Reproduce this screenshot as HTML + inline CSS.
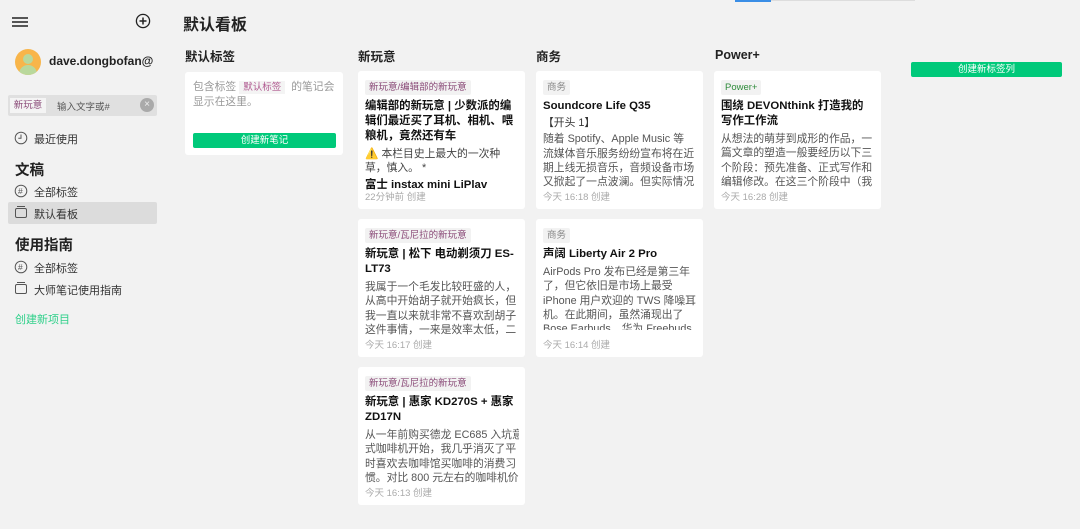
<!DOCTYPE html>
<html><head><meta charset="utf-8"><style>
*{margin:0;padding:0;box-sizing:border-box}
body{width:1080px;height:529px;background:#f2f2f2;font-family:"Liberation Sans","Noto Sans CJK SC",sans-serif;color:#222;position:relative;overflow:hidden}
.a{position:absolute}
.card{position:absolute;background:#fff;border-radius:3px;padding:6px 6px 0 7px;overflow:hidden;white-space:nowrap}
.tag{display:inline-block;background:#f2f2f2;color:#8a4a78;font-size:9.5px;padding:0 4px;line-height:15px;border-radius:2px}
.tag.g{color:#888}.tag.p{color:#2e8b3a}
.t{font-weight:bold;font-size:11.4px;line-height:15px;margin-top:4px;color:#111}
.b{font-size:10.8px;line-height:14.3px;color:#555;margin-top:3px;overflow:hidden}
.d{position:absolute;bottom:6px;left:7px;font-size:9.5px;color:#aaa}
.col{font-weight:bold;font-size:12.5px;top:46px}
.side{font-size:11px;color:#333}
.h{font-weight:bold;font-size:14.5px}
.btn{position:absolute;background:#00c97a;color:#fff;font-size:9.5px;text-align:center;border-radius:2px}
</style></head><body>
<div class="a" style="left:735px;top:0;width:36px;height:2px;background:#3a8ee6"></div>
<div class="a" style="left:771px;top:0;width:144px;height:1px;background:#ddd"></div>
<!-- sidebar -->
<svg class="a" style="left:11px;top:16px" width="18" height="12"><path d="M1 2H17M1 6H17M1 10H17" stroke="#222" stroke-width="1.6"/></svg>
<svg class="a" style="left:135px;top:13px" width="16" height="16"><circle cx="8" cy="8" r="6.6" fill="none" stroke="#222" stroke-width="1.3"/><path d="M8 4.5V11.5M4.5 8H11.5" stroke="#222" stroke-width="1.5"/></svg>
<div class="a" style="left:15px;top:49px;width:26px;height:26px;border-radius:50%;background:#f8b54a;overflow:hidden"><div class="a" style="left:8px;top:5px;width:10px;height:10px;border-radius:50%;background:#b9d89c"></div><div class="a" style="left:4px;top:16px;width:18px;height:12px;border-radius:9px 9px 0 0;background:#b9d89c"></div></div>
<div class="a" style="left:49px;top:54px;font-weight:bold;font-size:12px">dave.dongbofan@</div>
<div class="a" style="left:8px;top:95px;width:149px;height:21px;background:#e0e0e0;border-radius:2px"></div>
<div class="a" style="left:10px;top:98px;width:36px;height:15px;background:#f4f4f4;color:#8a4a78;font-size:9.5px;line-height:15px;text-align:center">新玩意</div>
<div class="a" style="left:57px;top:99px;font-size:9.5px;color:#555">输入文字或#</div>
<div class="a" style="left:140px;top:98px;width:14px;height:14px;border-radius:50%;background:#aaa;color:#eee;font-size:10px;line-height:14px;text-align:center">×</div>
<svg class="a" style="left:14px;top:131px" width="14" height="14"><circle cx="7" cy="7" r="5.8" fill="none" stroke="#555"/><path d="M7 3.5V7.3H4.3" stroke="#555" fill="none"/></svg>
<div class="a side" style="left:34px;top:131px">最近使用</div>
<div class="a h" style="left:15px;top:159px">文稿</div>
<svg class="a" style="left:14px;top:184px" width="14" height="14"><circle cx="7" cy="7" r="5.8" fill="none" stroke="#555"/><text x="4" y="10" font-size="8.5" fill="#555" font-family="Liberation Sans">#</text></svg>
<div class="a side" style="left:34px;top:184px">全部标签</div>
<div class="a" style="left:8px;top:202px;width:149px;height:22px;background:#dcdcdc;border-radius:2px"></div>
<svg class="a" style="left:14px;top:205px" width="14" height="14"><rect x="1.5" y="3.5" width="11" height="9" rx="1.5" fill="none" stroke="#555"/><path d="M3 1.5H11" stroke="#555"/></svg>
<div class="a side" style="left:34px;top:206px">默认看板</div>
<div class="a h" style="left:15px;top:234px">使用指南</div>
<svg class="a" style="left:14px;top:260px" width="14" height="14"><circle cx="7" cy="7" r="5.8" fill="none" stroke="#555"/><text x="4" y="10" font-size="8.5" fill="#555" font-family="Liberation Sans">#</text></svg>
<div class="a side" style="left:34px;top:260px">全部标签</div>
<svg class="a" style="left:14px;top:281px" width="14" height="14"><rect x="1.5" y="3.5" width="11" height="9" rx="1.5" fill="none" stroke="#555"/><path d="M3 1.5H11" stroke="#555"/></svg>
<div class="a side" style="left:34px;top:282px">大师笔记使用指南</div>
<div class="a" style="left:15px;top:311px;font-size:11px;color:#2fd08a">创建新项目</div>
<!-- main -->
<div class="a" style="left:183px;top:11px;font-weight:bold;font-size:16px">默认看板</div>
<div class="a col" style="left:185px">默认标签</div>
<div class="a col" style="left:358px">新玩意</div>
<div class="a col" style="left:536px">商务</div>
<div class="a col" style="left:715px;top:48px">Power+</div>
<div class="card" style="left:185px;top:72px;width:158px;height:83px;padding:8px">
<div style="font-size:10.8px;line-height:15px;color:#999">包含标签 <span style="background:#f4f4f4;color:#b05a90;font-size:9.5px;padding:1px 4px">默认标签</span> &nbsp;的笔记会<br>显示在这里。</div></div>
<div class="btn" style="left:193px;top:133px;width:143px;height:15px;line-height:15px">创建新笔记</div>
<div class="btn" style="left:911px;top:62px;width:151px;height:15px;line-height:15px">创建新标签列</div>

<div class="card" style="left:358px;top:71px;width:167px;height:138px">
<span class="tag">新玩意/编辑部的新玩意</span>
<div class="t">编辑部的新玩意 | 少数派的编<br>辑们最近买了耳机、相机、喂<br>粮机，竟然还有车</div>
<div class="b" style="color:#444">⚠️ 本栏目史上最大的一次种<br>草，慎入。 *</div>
<div class="t" style="margin-top:2px">富士 instax mini LiPlav</div>
<div class="d">22分钟前 创建</div></div>

<div class="card" style="left:358px;top:219px;width:167px;height:138px">
<span class="tag">新玩意/瓦尼拉的新玩意</span>
<div class="t">新玩意 | 松下 电动剃须刀 ES-<br>LT73</div>
<div class="b">我属于一个毛发比较旺盛的人，<br>从高中开始胡子就开始疯长，但<br>我一直以来就非常不喜欢刮胡子<br>这件事情，一来是效率太低，二</div>
<div class="d">今天 16:17 创建</div></div>

<div class="card" style="left:358px;top:367px;width:167px;height:138px">
<span class="tag">新玩意/瓦尼拉的新玩意</span>
<div class="t">新玩意 | 惠家 KD270S + 惠家<br>ZD17N</div>
<div class="b">从一年前购买德龙 EC685 入坑意<br>式咖啡机开始，我几乎消灭了平<br>时喜欢去咖啡馆买咖啡的消费习<br>惯。对比 800 元左右的咖啡机价</div>
<div class="d">今天 16:13 创建</div></div>

<div class="card" style="left:536px;top:71px;width:167px;height:138px">
<span class="tag g">商务</span>
<div class="t">Soundcore Life Q35</div>
<div class="b" style="margin-top:2px;color:#333">【开头 1】</div>
<div class="b" style="margin-top:2px">随着 Spotify、Apple Music 等<br>流媒体音乐服务纷纷宣布将在近<br>期上线无损音乐，音频设备市场<br>又掀起了一点波澜。但实际情况</div>
<div class="d">今天 16:18 创建</div></div>

<div class="card" style="left:536px;top:219px;width:167px;height:138px">
<span class="tag g">商务</span>
<div class="t">声阔 Liberty Air 2 Pro</div>
<div class="b" style="height:65px">AirPods Pro 发布已经是第三年<br>了，但它依旧是市场上最受<br>iPhone 用户欢迎的 TWS 降噪耳<br>机。在此期间，虽然涌现出了<br>Bose Earbuds、华为 Freebuds</div>
<div class="d">今天 16:14 创建</div></div>

<div class="card" style="left:714px;top:71px;width:167px;height:138px">
<span class="tag p">Power+</span>
<div class="t">围绕 DEVONthink 打造我的<br>写作工作流</div>
<div class="b">从想法的萌芽到成形的作品，一<br>篇文章的塑造一般要经历以下三<br>个阶段：预先准备、正式写作和<br>编辑修改。在这三个阶段中（我</div>
<div class="d">今天 16:28 创建</div></div>
</body></html>
